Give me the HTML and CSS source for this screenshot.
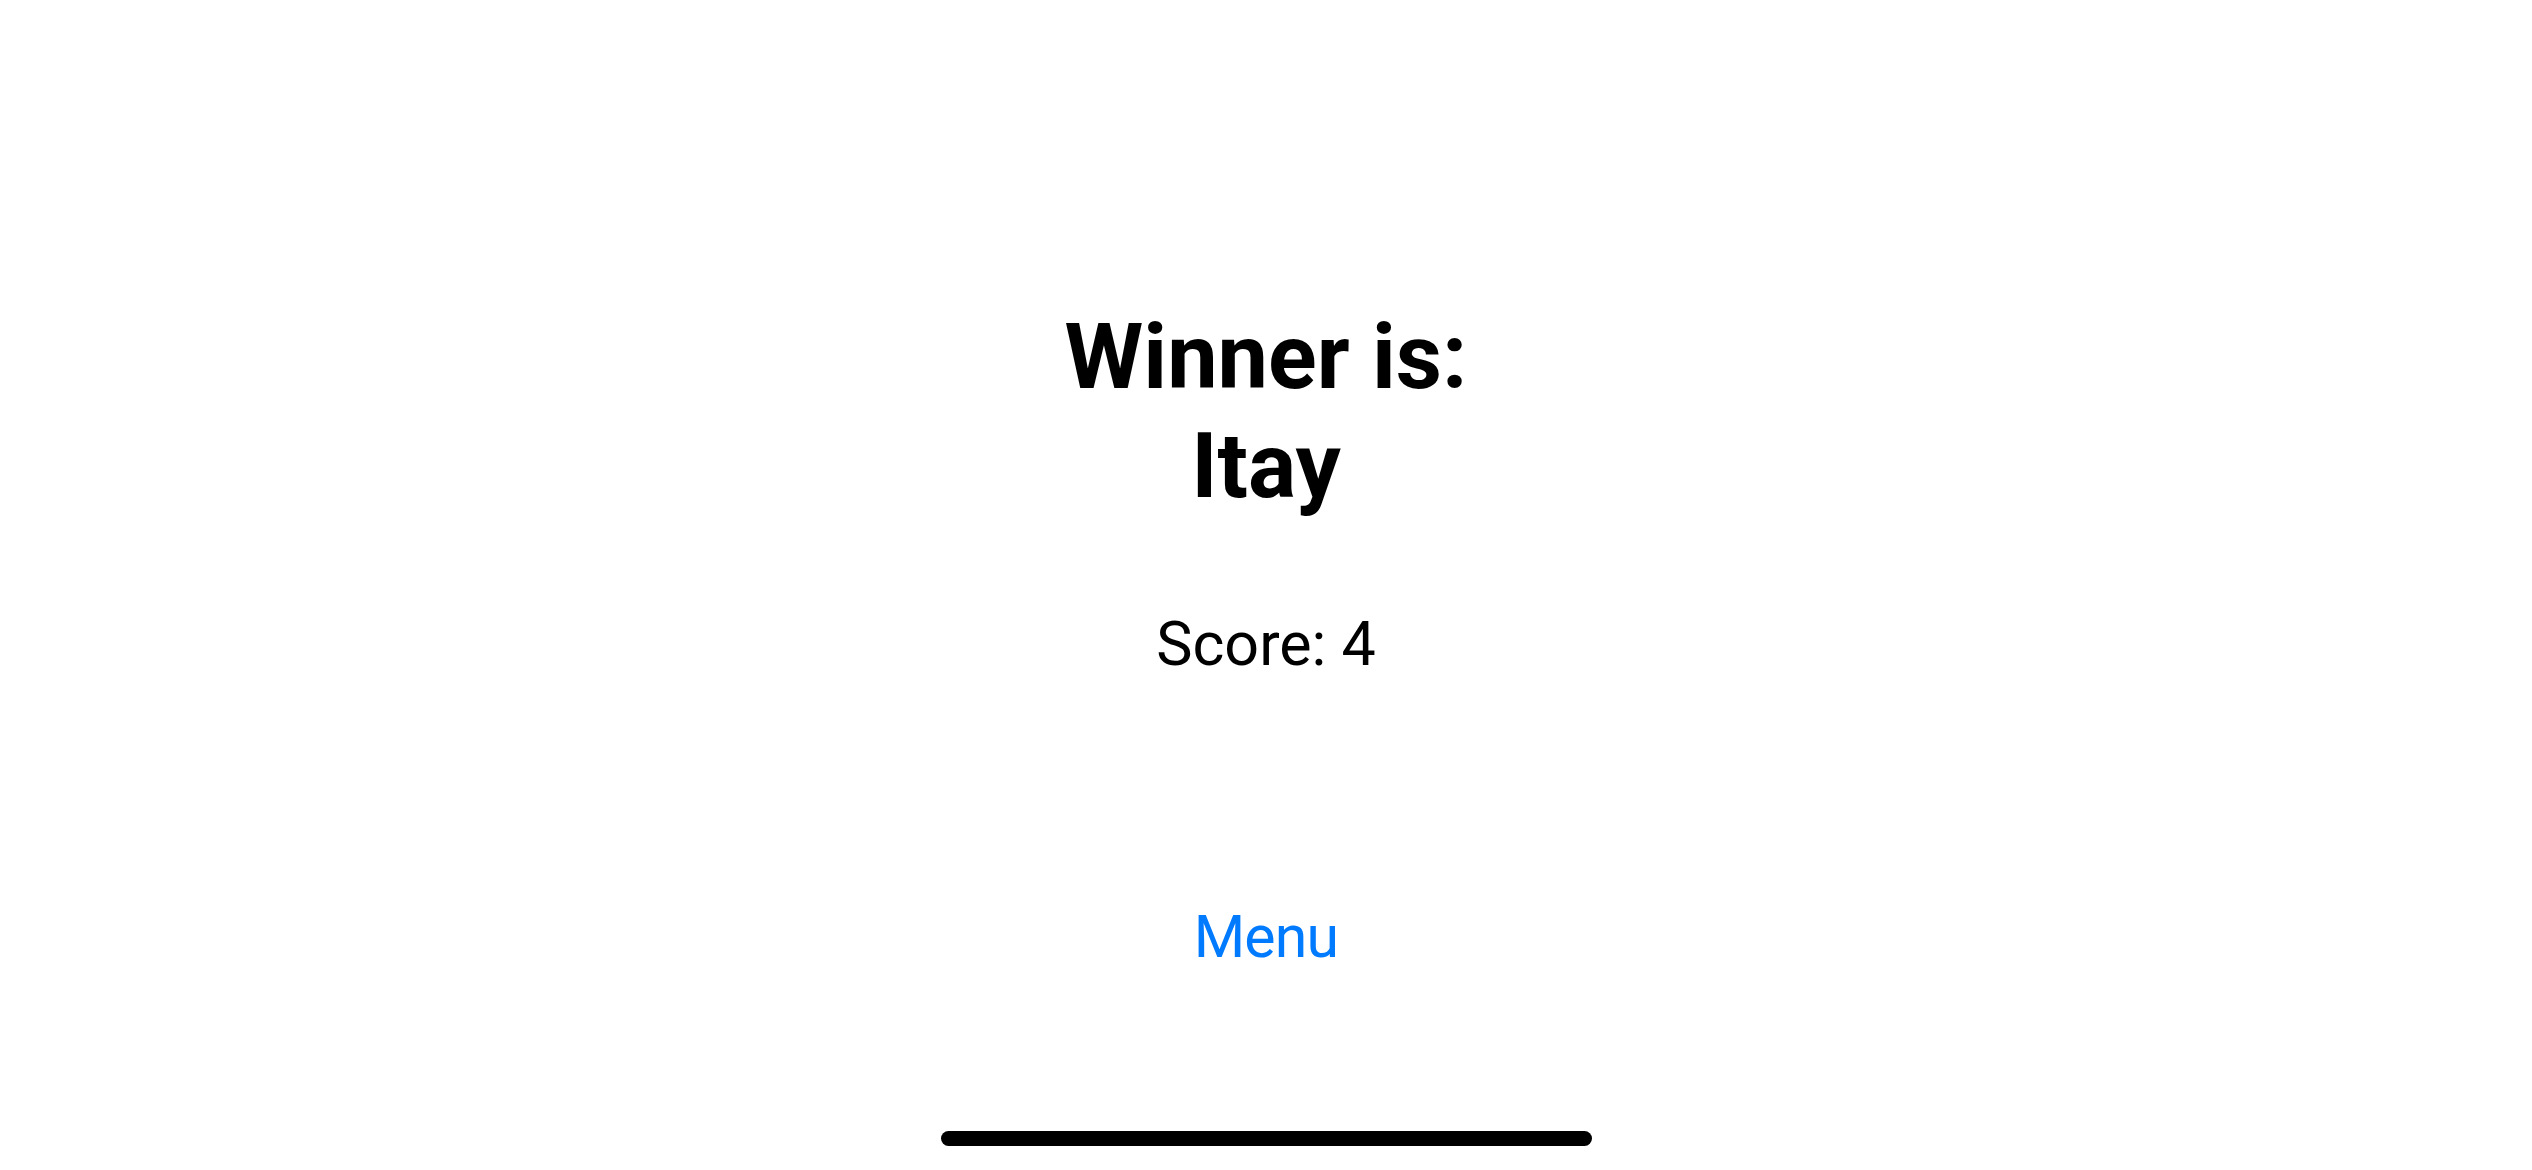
FILE: index.html
```html
<!DOCTYPE html>
<html lang="en">
<head>
<meta charset="utf-8">
<title>Winner</title>
<link rel="stylesheet" href="styles.css">
</head>
<body>
<main class="screen">
  <h1 class="winner-title">Winner is:<br>Itay</h1>
  <p class="score">Score: 4</p>
  <a class="menu-button" href="#">Menu</a>
  <div class="home-indicator"></div>
</main>
</body>
</html>
```
FILE: styles.css
```css
html, body {
  margin: 0;
  padding: 0;
  background: #ffffff;
}
.screen {
  width: 2532px;
  height: 1170px;
  display: flex;
  flex-direction: column;
  align-items: center;
  font-family: Roboto, Inter, "Liberation Sans", sans-serif;
  color: #000;
  padding-top: 303px;
  box-sizing: border-box;
}
.winner-title {
  margin: 0;
  font-size: 90px;
  font-weight: 700;
  line-height: 109px;
  text-align: center;
}
.score {
  margin: 87px 0 0;
  font-size: 61px;
  font-weight: 400;
  line-height: 73px;
}
.menu-button {
  margin-top: 219px;
  font-size: 59px;
  line-height: 73px;
  color: #007aff;
  text-decoration: none;
  letter-spacing: -0.8px;
}
.home-indicator {
  margin-top: 158px;
  width: 651px;
  height: 15px;
  border-radius: 8px;
  background: #000;
}
```
